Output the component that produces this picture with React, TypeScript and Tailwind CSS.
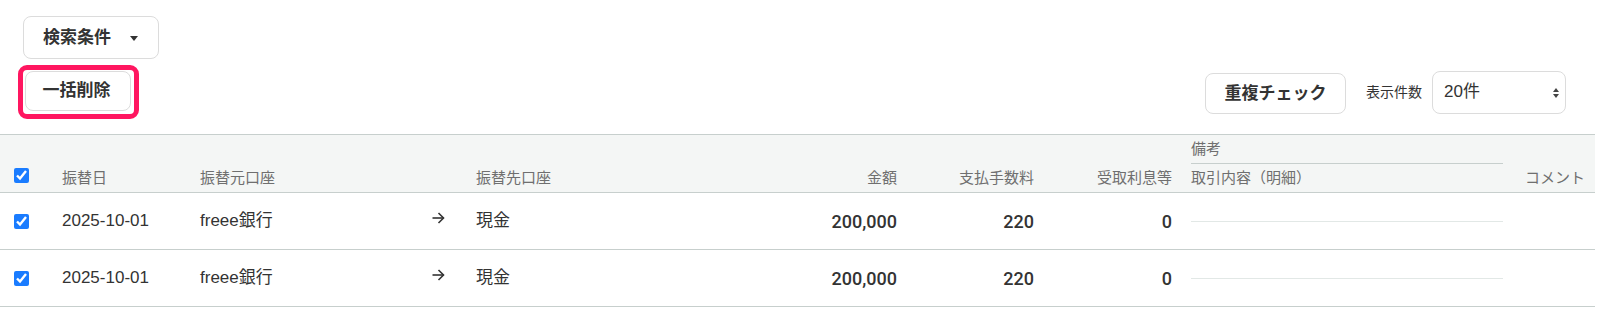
import { ChangeEvent, useState } from "react";

type Transfer = {
  id: number;
  date: string;
  from: string;
  to: string;
  amount: string;
  fee: string;
  interest: string;
};

const rows: Transfer[] = [
  { id: 1, date: "2025-10-01", from: "freee銀行", to: "現金", amount: "200,000", fee: "220", interest: "0" },
  { id: 2, date: "2025-10-01", from: "freee銀行", to: "現金", amount: "200,000", fee: "220", interest: "0" },
];

const cols =
  "grid grid-cols-[62px_138px_232px_44px_304px_117px_137px_138px_331px_1fr]";

const numCls = "text-right text-[18px] font-medium font-['Roboto','Liberation_Sans',sans-serif]";

const Arrow = () => (
  <svg width="13" height="12" viewBox="0 0 13 12" fill="none" stroke="#333" strokeWidth="1.6">
    <path d="M0.5 6h11" />
    <path d="M6.5 1l5 5-5 5" />
  </svg>
);

const App = () => {
  const [checked, setChecked] = useState<Record<number, boolean>>({ 1: true, 2: true });
  const [perPage, setPerPage] = useState("20");
  const allChecked = rows.every((r) => checked[r.id]);

  const toggleAll = () => {
    const next: Record<number, boolean> = {};
    rows.forEach((r) => (next[r.id] = !allChecked));
    setChecked(next);
  };

  return (
    <div className="w-[1598px] h-[319px] bg-white text-[#333] font-['Liberation_Sans','Noto_Sans_CJK_JP',sans-serif]">
      <div className="pl-[23px] pt-[16px]">
        <button className="h-[43px] flex items-center pl-[19px] pr-[20px] border border-[#dcdcdc] rounded-[8px] bg-white">
          <span className="text-[17px] font-bold leading-none">検索条件</span>
          <svg className="ml-[19px] mt-[1px]" width="8" height="5" viewBox="0 0 8 5">
            <path d="M0 0h8L4 5z" fill="#333" />
          </svg>
        </button>
      </div>

      <div className="flex items-center justify-between pl-[18px] pr-[32px] mt-[6px]">
        <div className="border-[5px] border-[#ff1660] rounded-[9px] pt-[1px] pl-[2px] pr-[3px] pb-[3px]">
          <button className="w-[106px] h-[40px] flex items-center justify-center pr-[3px] border border-[#dcdcdc] rounded-[8px] bg-white text-[17px] font-bold">
            一括削除
          </button>
        </div>

        <div className="flex items-center">
          <button className="w-[141px] h-[41px] mt-[3px] flex items-center justify-center border border-[#dcdcdc] rounded-[8px] bg-white text-[17px] font-bold">
            重複チェック
          </button>
          <span className="ml-[20px] text-[14px]">表示件数</span>
          <div className="relative ml-[10px]">
            <select
              value={perPage}
              onChange={(e: ChangeEvent<HTMLSelectElement>) => setPerPage(e.target.value)}
              className="appearance-none w-[134px] h-[43px] pl-[11px] border border-[#dcdcdc] rounded-[8px] bg-white text-[17px] text-[#333] outline-none"
            >
              <option value="20">20件</option>
              <option value="50">50件</option>
              <option value="100">100件</option>
            </select>
            <svg
              className="absolute right-[7px] top-[17px] pointer-events-none"
              width="6"
              height="10"
              viewBox="0 0 6 10"
            >
              <path d="M0 4h6L3 0z M0 6h6L3 10z" fill="#444" />
            </svg>
          </div>
        </div>
      </div>

      <div className="mt-[15px] mr-[3px]">
        <div className={`${cols} h-[59px] border-y border-[#c7cfcd] bg-[#f4f6f5] text-[15px] text-[#6f6f6f] leading-[20px]`}>
          <div className="flex items-end pl-[14px] pb-[9px]">
            <input
              type="checkbox"
              checked={allChecked}
              onChange={toggleAll}
              className="m-0 w-[15px] h-[15px] accent-[#1a7cff]"
            />
          </div>
          <div className="flex items-end pb-[4px]">振替日</div>
          <div className="flex items-end pb-[4px]">振替元口座</div>
          <div />
          <div className="flex items-end pb-[4px]">振替先口座</div>
          <div className="flex items-end justify-end pb-[4px]">金額</div>
          <div className="flex items-end justify-end pb-[4px]">支払手数料</div>
          <div className="flex items-end justify-end pb-[4px]">受取利息等</div>
          <div className="flex flex-col justify-end pl-[19px] pb-[4px]">
            <div className="pb-[4px] border-b border-[#c7cfcd]">備考</div>
            <div className="mt-[4px]">取引内容（明細）</div>
          </div>
          <div className="flex items-end pl-[22px] pb-[4px]">コメント</div>
        </div>

        {rows.map((r) => (
          <div key={r.id} className={`${cols} h-[57px] border-b border-[#c7cfcd] text-[17px] items-center`}>
            <div className="flex items-center pl-[14px]">
              <input
                type="checkbox"
                checked={!!checked[r.id]}
                onChange={() => setChecked({ ...checked, [r.id]: !checked[r.id] })}
                className="m-0 w-[15px] h-[15px] accent-[#1a7cff]"
              />
            </div>
            <div>{r.date}</div>
            <div>{r.from}</div>
            <div className="flex items-center pb-[6px]">
              <Arrow />
            </div>
            <div>{r.to}</div>
            <div className={numCls}>{r.amount}</div>
            <div className={numCls}>{r.fee}</div>
            <div className={numCls}>{r.interest}</div>
            <div className="pl-[19px]">
              <div className="h-px bg-[#e2e8e6]" />
            </div>
            <div />
          </div>
        ))}
      </div>
    </div>
  );
};

export default App;
